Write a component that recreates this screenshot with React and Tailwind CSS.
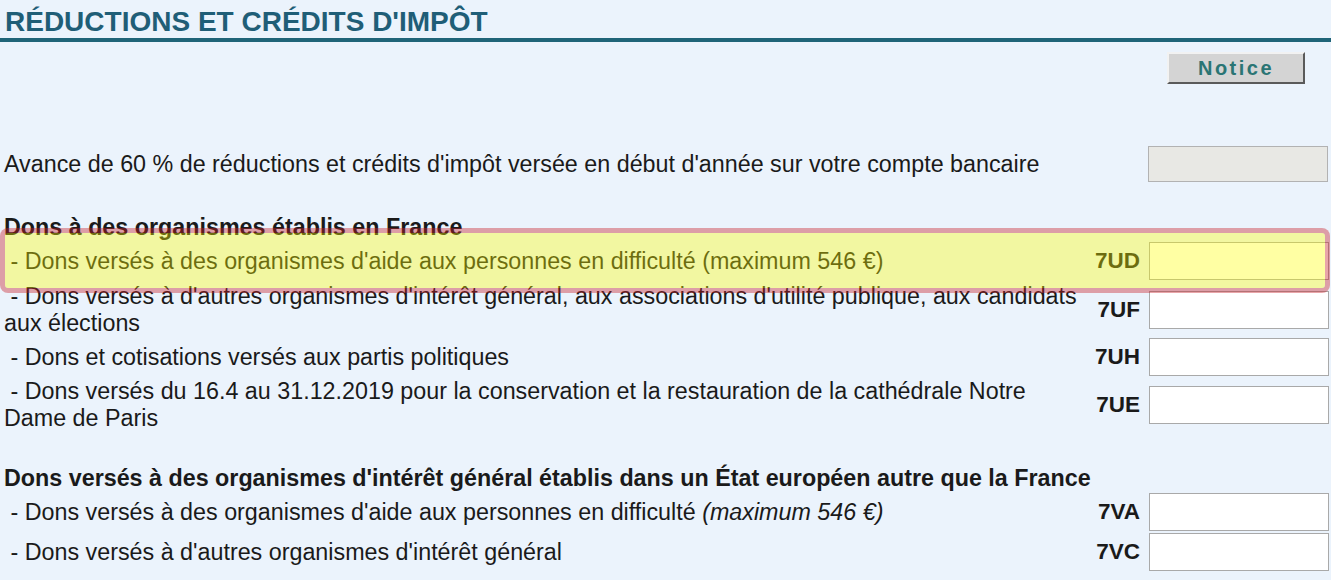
import React from 'react';

const rowsFrance = [
  { text: '- Dons versés à des organismes d\'aide aux personnes en difficulté (maximum 546 €)', code: '7UD', highlight: true },
  { text: '- Dons versés à d\'autres organismes d\'intérêt général, aux associations d\'utilité publique, aux candidats aux élections', code: '7UF', extra: 'mt-[2px]' },
  { text: '- Dons et cotisations versés aux partis politiques', code: '7UH' },
  { text: '- Dons versés du 16.4 au 31.12.2019 pour la conservation et la restauration de la cathédrale Notre Dame de Paris', code: '7UE', extra: 'mt-[1px]' },
];

function Row({ children, code, highlight, extra = '' }) {
  return (
    <div className={`relative flex items-center min-h-[40px] pl-[4px] ${extra}`}>
      <div className="w-[1080px] leading-[27px]">{children}</div>
      <div className="w-[56px] text-right font-bold text-[22.5px]">{code}</div>
      <input
        type="text"
        className="ml-[9px] w-[180px] h-[38px] bg-white border border-[#a9a9a9] outline-none"
      />
      {highlight && (
        <div className="pointer-events-none absolute -top-[13px] -bottom-[12px] left-0 right-[1px] z-10 rounded-[8px] border-[5px] border-[rgba(200,30,40,0.4)] bg-[rgba(255,255,0,0.36)] bg-clip-padding" />
      )}
    </div>
  );
}

export default function App() {
  return (
    <div className="w-[1331px] h-[580px] overflow-hidden bg-[#ebf3fc] text-[23.3px] text-[#1a1a1a] font-['Liberation_Sans',Arial,sans-serif]">
      {/* Title */}
      <div className="h-[42px] border-b-4 border-[#1f6478]">
        <h1 className="pt-[8px] pl-[5px] text-[28px] leading-[28px] font-bold text-[#1f5e77]">
          RÉDUCTIONS ET CRÉDITS D'IMPÔT
        </h1>
      </div>

      <div className="flex justify-end pr-[26px] pt-[10px]">
        <button className="w-[138px] h-[32px] bg-[#d4d4d4] border-2 border-t-[#f2f2f2] border-l-[#f2f2f2] border-b-[#5a5a5a] border-r-[#5a5a5a] text-[20px] font-bold tracking-[2.5px] text-[#2a7574] leading-none">
          Notice
        </button>
      </div>

      {/* Avance */}
      <div className="flex items-center mt-[62px] pl-[4px]">
        <div className="flex-1 leading-[27px]">
          Avance de 60 % de réductions et crédits d'impôt versée en début d'année sur votre compte bancaire
        </div>
        <div className="mr-[3px] w-[180px] h-[36px] bg-[#e8e8e4] border border-[#b2b2b2]" />
      </div>

      {/* France */}
      <div className="mt-[32px] pl-[4px] font-bold leading-[27px]">Dons à des organismes établis en France</div>
      {rowsFrance.map((r) => (
        <Row key={r.code} code={r.code} highlight={r.highlight} extra={r.extra}>
          {'\u00a0'}{r.text}
        </Row>
      ))}

      {/* Europe */}
      <div className="mt-[33px] pl-[4px] font-bold leading-[27px]">
        Dons versés à des organismes d'intérêt général établis dans un État européen autre que la France
      </div>
      <Row code="7VA" extra="min-h-[39px]">
        {'\u00a0'}- Dons versés à des organismes d'aide aux personnes en difficulté <i>(maximum 546 €)</i>
      </Row>
      <Row code="7VC" extra="min-h-[39px]">
        {'\u00a0'}- Dons versés à d'autres organismes d'intérêt général
      </Row>
    </div>
  );
}
